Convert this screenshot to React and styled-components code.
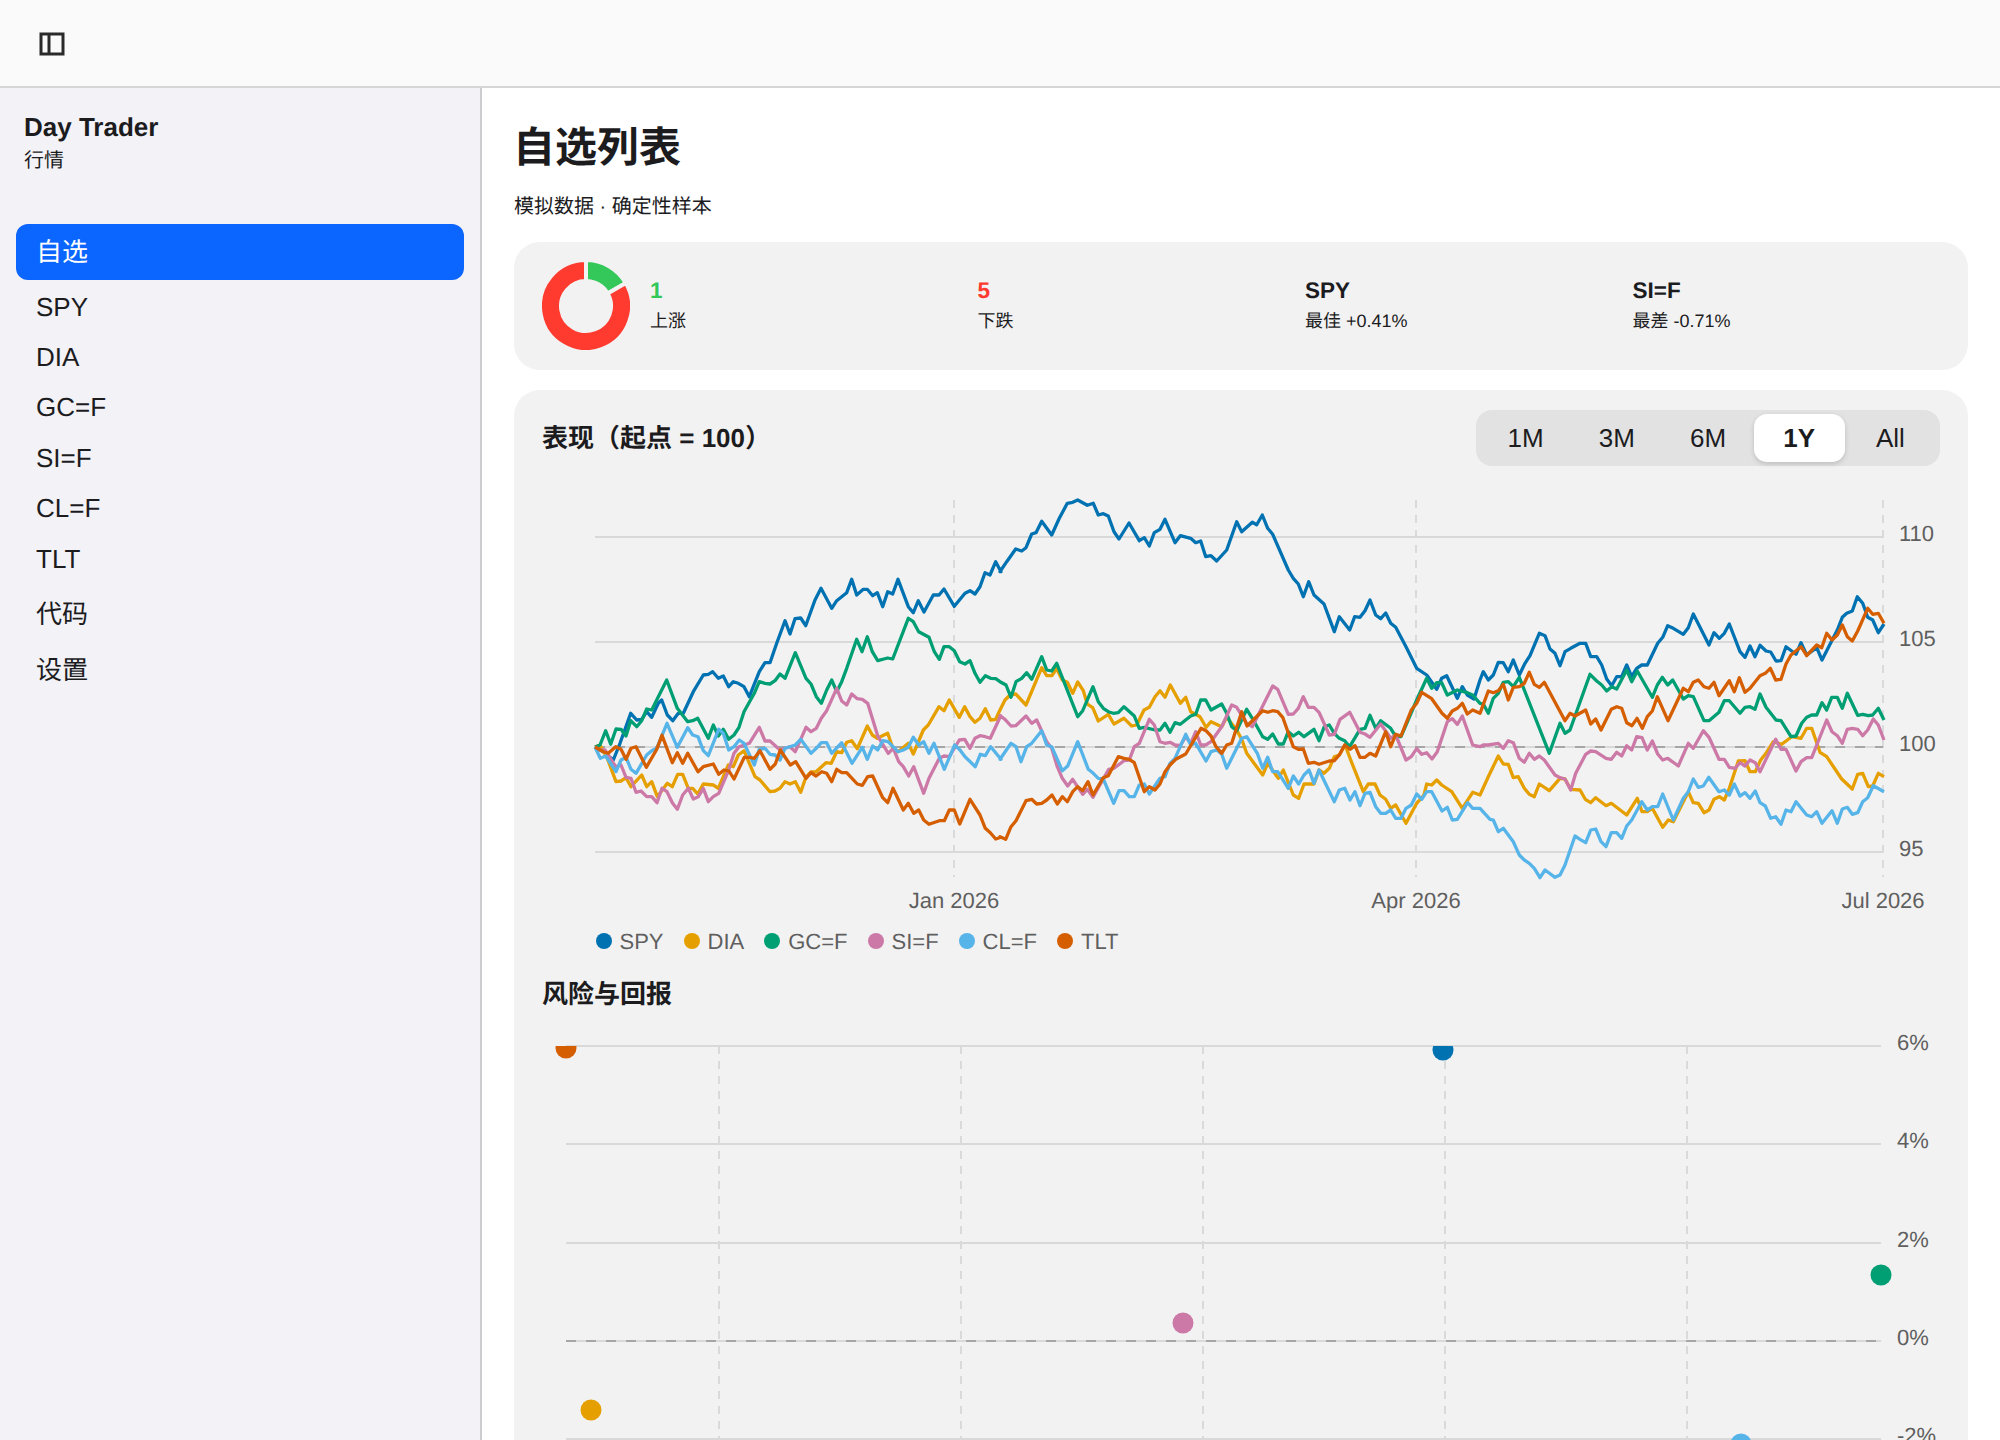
import React from 'react';
import styled, { createGlobalStyle } from 'styled-components';

const GlobalStyle = createGlobalStyle`
  html, body, #root {
    margin: 0;
    height: 100%;
  }
  body {
    font-family: "Liberation Sans", "Noto Sans CJK JP", sans-serif;
    text-rendering: geometricPrecision;
    color: #1c1c1e;
    background: #fff;
    overflow: hidden;
  }
`;

const Shell = styled.div`
  height: 100vh;
  display: flex;
  flex-direction: column;
`;

const TopBar = styled.header`
  flex: none;
  height: 86px;
  display: flex;
  align-items: center;
  padding-left: 39px;
  background: #fafafa;
  border-bottom: 2px solid #d6d6d6;
`;

const ToggleIcon = styled.svg`
  margin-top: 2px;
`;

const Body = styled.div`
  flex: 1;
  min-height: 0;
  display: flex;
`;

const Sidebar = styled.aside`
  flex: none;
  width: 480px;
  background: #f2f2f7;
  border-right: 2px solid #cdcdd0;
`;

const Brand = styled.div`
  padding: 24px 24px 0;
  margin-bottom: 49px;
`;

const BrandName = styled.div`
  font-size: 26px;
  line-height: 30px;
  font-weight: 700;
`;

const BrandSub = styled.div`
  font-size: 20px;
  line-height: 28px;
  margin-top: 5px;
`;

const Nav = styled.nav`
  display: flex;
  flex-direction: column;
  padding: 0 16px;
`;

const NavItem = styled.a`
  display: flex;
  align-items: center;
  height: ${props => (props.$tall ? '56px' : '50.4px')};
  padding: 0 20px;
  font-size: 26px;
  line-height: 30px;
  border-radius: 12px;
  color: ${props => (props.$active ? '#fff' : '#1c1c1e')};
  background: ${props => (props.$active ? '#0a66ff' : 'transparent')};
  margin-bottom: ${props => (props.$active ? '1.5px' : '0')};
  margin-top: ${props => (props.$gap ? '2.5px' : '0')};
`;

const Main = styled.main`
  flex: 1;
  min-width: 0;
  overflow: hidden;
  padding: 28.5px 32px 32px;
`;

const PageTitle = styled.h1`
  margin: 0 0 0 -1px;
  font-size: 42px;
  line-height: 61px;
  font-weight: 700;
`;

const PageSub = styled.p`
  margin: 15px 0 21.5px;
  font-size: 20px;
  line-height: 28px;
`;

const Card = styled.section`
  background: #f2f2f2;
  border-radius: 26px;
  padding: 20px 28px;
`;

const SummaryCard = styled(Card)`
  display: flex;
  align-items: center;
  gap: 20px;
  margin-bottom: 20px;
`;

const StatGrid = styled.div`
  flex: 1;
  display: grid;
  grid-template-columns: repeat(4, 1fr);
  gap: 20px;
`;

const Stat = styled.div`
  display: flex;
  flex-direction: column;
  gap: 3px;
  padding-bottom: 2px;
`;

const StatValue = styled.div`
  font-size: 22.5px;
  line-height: 28px;
  font-weight: 700;
  color: ${props => props.$color || '#1c1c1e'};
`;

const StatLabel = styled.div`
  font-size: 18px;
  line-height: 26px;
`;

const ChartHead = styled.div`
  display: flex;
  align-items: center;
  justify-content: space-between;
`;

const SectionTitle = styled.h2`
  margin: 0;
  font-size: 26px;
  line-height: 36px;
  font-weight: 700;
`;

const Segments = styled.div`
  display: flex;
  box-sizing: border-box;
  width: 464px;
  height: 56px;
  padding: 4px;
  background: #e2e2e2;
  border-radius: 16px;
`;

const Segment = styled.button`
  flex: 1;
  border: 0;
  padding: 0;
  font: inherit;
  font-size: 26px;
  font-weight: ${props => (props.$active ? 700 : 400)};
  color: #1c1c1e;
  border-radius: 13px;
  background: ${props => (props.$active ? '#fff' : 'transparent')};
  box-shadow: ${props => (props.$active ? '0 2px 5px rgba(0, 0, 0, 0.16)' : 'none')};
`;

const PlotSvg = styled.svg`
  display: block;
  width: 1398px;
  margin-top: ${props => props.$top}px;
`;

const Legend = styled.div`
  display: flex;
  align-items: center;
  gap: 20px;
  margin-top: 8.5px;
  padding-left: 53.5px;
`;

const LegendItem = styled.div`
  display: flex;
  align-items: center;
  gap: 8px;
  font-size: 22px;
  line-height: 25px;
  color: #5f5f5f;
`;

const LegendDot = styled.span`
  width: 16px;
  height: 16px;
  border-radius: 50%;
  background: ${props => props.$color};
`;

const RiskTitle = styled(SectionTitle)`
  margin-top: 22.5px;
`;

const GridLine = styled.line`
  stroke: ${props => (props.$vertical ? '#dadada' : '#d9d9d9')};
  stroke-width: 2;
  stroke-dasharray: ${props => (props.$vertical ? '8 7' : 'none')};
`;

const ZeroLine = styled.line`
  stroke: #a6a6a6;
  stroke-width: 2;
  stroke-dasharray: 10 10;
`;

const AxisText = styled.text`
  font-family: "Liberation Sans", sans-serif;
  font-size: 22px;
  fill: #5f5f5f;
`;

const SeriesLine = styled.polyline`
  fill: none;
  stroke: ${props => props.$color};
  stroke-width: 3.3;
  stroke-linejoin: round;
`;

const NAV = [
  { label: 'SPY' },
  { label: 'DIA' },
  { label: 'GC=F' },
  { label: 'SI=F' },
  { label: 'CL=F' },
  { label: 'TLT' },
  { label: '代码', tall: true, gap: true },
  { label: '设置', tall: true },
];
const RANGES = ['1M', '3M', '6M', '1Y', 'All'];

const STATS = [
  { value: '1', label: '上涨', color: '#34c759' },
  { value: '5', label: '下跌', color: '#ff3b30' },
  { value: 'SPY', label: '最佳 +0.41%' },
  { value: 'SI=F', label: '最差 -0.71%' },
];

// traced in three overlapping windows of the chart, 3 units per pixel
const WINDOWS = [520, 1000, 1480];

const SERIES = [
  {
    name: 'SPY',
    color: '#0072b2',
    traces: [
      '225,801 250,815 280,840 300,790 332,700 350,720 365,718 380,695 395,712 415,670 425,660 442,705 458,722 475,700 490,700 520,635 550,585 565,583 578,575 595,595 610,588 626,620 640,605 655,610 672,620 688,650 718,575 735,548 750,548 770,490 795,422 810,462 825,416 842,414 857,437 885,360 903,325 935,385 950,362 980,338 995,298 1010,345 1030,328 1042,328 1058,347 1072,338 1088,380 1103,335 1118,342 1134,298 1165,380 1180,398 1195,362 1212,396 1240,345 1257,345 1272,327 1303,379 1335,340 1350,332 1365,342 1380,320 1395,278 1410,285 1427,245 1443,275',
      '0,275 20,245 47,207 65,213 78,203 95,162 108,158 125,124 155,165 178,115 202,70 218,67 233,60 262,76 280,70 295,105 310,101 325,108 342,155 357,177 387,129 418,182 433,173 448,198 463,158 480,148 495,118 525,188 541,167 572,175 587,188 602,183 617,230 633,227 650,243 680,210 710,125 725,155 757,127 770,134 787,105 803,145 818,163 865,270 880,295 895,312 910,350 926,305 942,345 972,372 1003,455 1018,410 1049,450 1064,410 1080,412 1095,392 1110,360 1127,405 1142,416 1157,399 1172,430 1187,442 1218,500 1250,565 1280,585 1310,628 1325,595 1340,587 1372,655 1387,620 1402,645 1422,657',
      '0,600 10,575 25,600 40,585 55,547 70,548 85,575 100,540 118,585 135,550 150,527 178,460 195,467 210,507 225,520 240,557 255,515 272,505 300,490 317,490 332,530 350,530 365,555 380,597 395,617 410,590 425,590 440,555 455,590 470,565 485,555 502,555 533,490 548,472 563,437 580,445 610,463 625,443 640,402 687,495 702,458 718,475 733,460 748,432 780,515 795,532 810,498 825,530 840,496 858,513 872,516 888,543 903,542 918,500 948,523 963,488 980,525 1010,503 1026,540 1072,450 1087,412 1100,400 1117,393 1132,350 1148,370 1163,412 1178,420 1195,458 1212,432',
    ],
  },
  {
    name: 'DIA',
    color: '#e69f00',
    traces: [
      '225,801 240,795 260,830 288,905 303,903 318,893 333,920 365,885 380,920 395,905 412,950 442,910 457,920 473,883 488,883 505,925 518,925 533,942 550,912 580,915 595,925 625,855 640,860 655,825 672,812 705,890 720,900 750,935 765,933 780,925 795,905 810,912 826,905 842,937 857,893 872,876 888,875 918,848 934,850 950,815 965,818 980,787 995,782 1012,806 1042,738 1057,765 1072,775 1103,760 1118,803 1134,815 1165,790 1180,822 1210,750 1225,735 1257,680 1272,692 1288,660 1318,712 1334,680 1350,710 1365,727 1380,715 1396,686 1412,720 1427,718',
      '0,690 15,660 30,645 47,642 78,675 125,563 140,587 155,587 170,566 187,600 202,607 218,640 233,606 250,632 262,672 278,683 295,723 325,703 342,732 372,715 395,738 410,735 432,690 448,682 465,650 480,632 495,652 511,615 541,670 557,652 572,695 600,710 618,742 633,725 665,740 680,712 710,750 726,780 740,820 788,885 803,850 835,895 850,870 880,945 896,955 912,912 942,912 957,870 972,880 988,865 1003,830 1018,825 1035,795 1060,860 1090,935 1105,912 1125,912 1140,945 1157,958 1172,985 1187,975 1218,1030 1250,970 1272,945 1280,912 1295,915 1310,900 1325,915 1355,935 1387,985 1418,937',
      '0,945 25,890 55,828 70,852 85,853 100,893 115,890 133,925 148,943 163,950 178,912 208,932 240,895 255,897 272,928 300,930 316,958 332,968 347,953 378,977 394,970 440,1005 472,955 486,995 502,995 517,985 548,1042 565,1020 580,1025 625,935 640,968 655,970 672,998 687,990 702,958 718,950 733,960 748,925 775,843 795,842 810,875 826,875 842,840 858,820 880,785 905,793 935,770 963,775 980,745 995,745 1020,817 1040,830 1085,897 1117,927 1133,883 1148,880 1165,920 1178,918 1195,880 1212,890',
    ],
  },
  {
    name: 'GC=F',
    color: '#009e73',
    traces: [
      '225,801 240,795 257,752 272,793 288,747 303,748 318,768 332,722 350,740 365,722 380,687 395,690 440,600 472,685 503,725 518,722 533,715 565,775 580,735 595,768 610,748 626,778 642,765 657,742 672,695 703,640 718,605 735,610 750,612 765,602 780,582 795,595 826,518 858,595 873,612 889,650 904,670 920,630 935,600 950,635 965,605 980,565 1010,478 1026,515 1042,470 1057,515 1073,542 1103,534 1118,537 1165,415 1180,425 1196,455 1227,472 1243,515 1258,538 1272,500 1288,500 1303,512 1319,545 1335,552 1350,542 1365,580 1380,607 1396,587 1412,595 1427,596',
      '0,605 18,615 33,652 48,605 65,595 80,578 95,598 125,530 140,570 155,573 170,550 233,710 248,692 279,620 295,665 310,685 325,695 340,700 355,698 372,680 403,708 418,745 433,742 465,750 480,750 495,730 510,757 525,728 541,733 572,708 587,703 602,660 617,660 633,690 665,672 680,700 695,740 710,752 740,688 757,715 788,770 803,778 818,762 835,792 850,792 865,755 880,768 896,757 912,770 942,748 957,782 973,740 988,735 1003,760 1018,775 1034,782 1049,800 1080,748 1095,745 1110,706 1127,745 1142,722 1172,745 1187,770 1203,770 1250,660 1280,595 1295,625 1310,608 1325,608 1342,645 1372,630 1402,638 1418,645',
      '0,670 10,672 25,700 40,655 55,640 70,607 85,605 100,620 118,592 208,820 240,730 255,760 270,750 330,583 350,603 365,615 380,633 395,620 410,627 440,570 455,605 472,573 517,652 532,615 547,592 563,615 578,600 610,657 625,647 640,650 672,722 687,722 717,697 733,662 748,662 780,700 795,682 810,680 825,688 840,642 858,682 888,720 903,722 933,770 948,768 965,730 980,712 995,705 1010,705 1026,668 1040,690 1055,652 1072,652 1087,685 1102,640 1133,706 1148,703 1165,707 1178,705 1195,685 1212,720',
    ],
  },
  {
    name: 'SI=F',
    color: '#cc79a7',
    traces: [
      '225,801 240,810 255,810 287,860 303,855 318,892 333,895 348,937 363,933 380,950 395,950 411,968 426,925 441,935 457,968 472,988 488,945 505,925 520,957 535,950 550,925 565,965 580,950 596,940 626,870 642,820 657,800 688,790 718,742 735,783 750,783 780,810 795,805 810,800 826,815 858,742 873,755 889,745 904,715 920,692 950,625 965,663 980,675 995,642 1012,656 1027,658 1043,670 1074,770 1105,820 1120,805 1136,845 1150,860 1166,888 1181,860 1211,940 1227,895 1258,835 1272,828 1288,830 1318,780 1334,778 1350,805 1365,775 1380,767 1396,770 1411,775 1442,707',
      '0,707 15,718 33,738 47,737 78,708 95,730 110,720 140,785 155,805 172,860 187,895 203,918 218,898 248,943 262,928 279,952 326,868 342,865 372,842 388,840 403,800 418,790 448,718 463,735 480,785 495,790 510,787 525,795 541,797 557,770 572,790 587,755 602,795 617,795 633,785 665,740 695,675 710,682 740,730 757,740 818,618 833,628 865,703 880,702 895,685 910,650 925,682 942,682 957,697 988,765 1003,763 1020,718 1049,697 1080,757 1095,762 1110,772 1142,732 1172,775 1187,765 1218,840 1234,830 1250,806 1265,823 1280,818 1296,837 1312,815 1342,725 1357,716 1372,733 1387,708 1418,795',
      '0,800 10,795 25,795 55,790 70,805 85,782 100,788 118,835 133,847 148,820 163,838 178,828 193,840 225,885 240,893 255,897 272,930 287,880 317,823 332,813 347,815 378,835 394,838 410,817 425,828 440,797 455,810 470,770 486,773 502,810 517,783 533,822 548,840 563,835 595,858 625,790 640,805 670,752 687,772 717,838 733,838 748,862 765,865 780,848 795,858 810,840 826,848 840,875 887,778 903,808 918,808 948,873 963,845 980,833 995,833 1040,720 1056,755 1072,767 1087,790 1102,748 1117,745 1133,748 1148,767 1163,750 1180,717 1195,735 1212,780',
    ],
  },
  {
    name: 'CL=F',
    color: '#56b4e9',
    traces: [
      '225,801 241,835 257,828 288,875 303,840 318,832 333,868 348,880 380,825 395,812 410,805 441,730 472,802 503,743 518,765 534,770 550,812 565,827 596,748 610,760 626,810 642,800 658,780 672,790 703,855 718,808 735,805 750,823 765,825 780,840 795,805 826,795 842,778 873,820 889,805 904,788 920,788 935,820 965,788 996,850 1027,802 1042,838 1058,798 1073,810 1088,782 1104,785 1134,815 1150,810 1165,802 1180,772 1196,795 1211,785 1227,820 1242,790 1273,868 1304,795 1320,810 1335,830 1366,860 1381,823 1396,827 1412,800 1443,838',
      '0,838 33,790 48,800 63,845 80,800 95,790 125,752 140,795 155,800 187,872 203,858 233,785 265,868 280,880 295,895 310,897 341,970 357,932 372,932 388,950 403,950 418,915 433,912 448,942 480,895 495,890 510,850 525,835 557,763 572,795 587,790 618,843 633,815 650,810 665,822 680,865 710,805 725,775 740,770 772,820 788,865 803,832 818,875 833,875 865,925 880,888 896,912 912,885 927,870 942,910 957,870 1003,965 1018,930 1034,925 1050,960 1065,935 1080,977 1095,940 1110,937 1127,980 1142,1000 1157,1000 1172,990 1187,1015 1203,1015 1218,985 1234,975 1250,942 1265,958 1280,935 1295,935 1326,993 1342,982 1357,1020 1372,1018 1403,968 1418,985',
      '0,985 30,1018 40,1020 55,1055 70,1045 100,1085 118,1125 133,1140 148,1150 163,1165 180,1193 195,1170 225,1192 240,1185 255,1155 285,1068 300,1078 317,1088 332,1050 347,1047 363,1085 378,1100 394,1058 410,1058 425,1075 440,1038 455,1020 485,965 502,990 517,980 533,980 548,942 580,1020 610,955 625,935 640,897 655,922 670,918 686,892 717,935 733,930 748,945 763,912 780,948 795,938 810,955 826,933 840,968 856,978 872,1015 887,1010 903,1033 918,990 933,995 948,965 980,1005 995,1010 1010,995 1026,1030 1056,992 1072,1030 1087,987 1102,982 1117,1003 1133,998 1148,965 1163,953 1180,917 1212,935',
    ],
  },
  {
    name: 'TLT',
    color: '#d55e00',
    traces: [
      '225,801 250,815 265,820 287,800 303,808 318,838 333,805 348,800 379,862 410,808 426,766 457,848 472,818 488,850 503,820 534,875 550,860 580,852 596,883 612,870 627,873 642,897 673,832 690,832 703,835 720,812 750,868 766,852 781,810 811,855 827,845 858,895 873,878 888,888 905,875 920,880 935,905 950,868 965,878 980,878 996,895 1012,912 1027,916 1043,890 1058,888 1088,953 1103,968 1119,925 1150,990 1165,970 1181,1000 1196,990 1211,1020 1227,1033 1258,1022 1273,1022 1288,990 1303,990 1319,1032 1350,958 1380,1005 1396,1045 1411,1058 1427,1077 1443,1072',
      '0,1070 17,1078 33,1040 48,1022 78,962 95,958 110,972 125,970 140,960 156,945 172,972 187,950 202,965 218,935 233,920 248,932 264,905 279,945 310,893 325,887 355,830 372,835 388,838 403,848 433,935 448,920 465,930 480,912 495,875 510,855 527,838 557,822 603,745 618,752 633,768 648,800 665,820 680,795 695,790 725,695 741,738 788,692 803,697 818,692 833,695 848,712 880,800 895,808 910,807 925,850 942,847 957,853 988,843 1003,842 1018,825 1034,795 1050,808 1065,797 1080,832 1095,832 1110,820 1127,828 1157,755 1172,800 1187,763 1203,768 1234,690 1250,670 1265,637 1295,656 1326,700 1342,715 1357,693 1372,685 1387,670 1402,702 1418,690',
      '0,700 25,633 40,638 55,632 70,613 85,660 100,622 118,620 133,610 148,577 163,613 178,622 193,607 255,722 270,700 285,708 317,690 332,732 347,717 363,750 394,688 410,680 425,685 440,728 456,737 471,715 487,745 502,710 517,693 532,650 564,722 610,625 625,635 640,607 655,600 672,620 687,625 702,607 717,647 748,602 763,635 778,593 795,637 810,625 840,587 856,580 871,565 887,600 903,598 918,552 933,525 963,500 980,527 1010,495 1025,503 1040,460 1056,480 1072,465 1087,435 1102,470 1117,483 1133,453 1163,385 1178,403 1195,400 1212,430',
    ],
  },
];

const toPoints = traces =>
  traces
    .map((trace, i) =>
      trace
        .split(' ')
        .map(pair => {
          const [x, y] = pair.split(',').map(Number);
          return `${(WINDOWS[i] + x / 3).toFixed(1)},${(480 + y / 3).toFixed(1)}`;
        })
        .join(' ')
    )
    .join(' ');

const PERF_TICKS = [
  { label: '110', y: 537 },
  { label: '105', y: 642 },
  { label: '100', y: 747 },
  { label: '95', y: 852 },
];

const PERF_DATES = [
  { label: 'Jan 2026', x: 954 },
  { label: 'Apr 2026', x: 1416 },
  { label: 'Jul 2026', x: 1883 },
];

const RISK_TICKS = [
  { label: '6%', y: 1046 },
  { label: '4%', y: 1144 },
  { label: '2%', y: 1243 },
  { label: '0%', y: 1341 },
  { label: '-2%', y: 1439 },
];

const RISK_COLS = [719, 961, 1203, 1445, 1687];

const RISK_DOTS = [
  { name: 'SPY', color: '#0072b2', cx: 1443, cy: 1050 },
  { name: 'DIA', color: '#e69f00', cx: 591, cy: 1410 },
  { name: 'GC=F', color: '#009e73', cx: 1881, cy: 1275 },
  { name: 'SI=F', color: '#cc79a7', cx: 1183, cy: 1323 },
  { name: 'CL=F', color: '#56b4e9', cx: 1741, cy: 1444 },
  { name: 'TLT', color: '#d55e00', cx: 566, cy: 1048 },
];

const PanelIcon = () => (
  <ToggleIcon width="26" height="24" viewBox="0 0 26 24" fill="none" stroke="#2a2a2a" strokeWidth="3">
    <rect x="2" y="2" width="22" height="20" />
    <line x1="10" y1="1" x2="10" y2="23" />
  </ToggleIcon>
);

const sectorPath = (from, to, outer, inner) => {
  const at = (deg, r) => {
    const a = (deg * Math.PI) / 180;
    return `${(r * Math.sin(a)).toFixed(2)} ${(-r * Math.cos(a)).toFixed(2)}`;
  };
  const large = to - from > 180 ? 1 : 0;
  return `M${at(from, outer)} A${outer} ${outer} 0 ${large} 1 ${at(to, outer)} L${at(to, inner)} A${inner} ${inner} 0 ${large} 0 ${at(from, inner)} Z`;
};

const Donut = () => (
  <svg width="88" height="88" viewBox="-44 -44 88 88">
    <path d={sectorPath(0, 60, 46, 25)} fill="#34c759" stroke="#f2f2f2" strokeWidth="4" />
    <path d={sectorPath(60, 360, 46, 25)} fill="#ff3b30" stroke="#f2f2f2" strokeWidth="4" />
  </svg>
);

const PerformanceChart = () => (
  <PlotSvg $top={24} height="430" viewBox="542 490 1398 430">
    {PERF_DATES.map(d => (
      <GridLine key={d.label} $vertical x1={d.x} x2={d.x} y1="500" y2="877" />
    ))}
    {PERF_TICKS.map(t => (
      <GridLine key={t.label} x1="595" x2="1883" y1={t.y} y2={t.y} />
    ))}
    <ZeroLine x1="595" x2="1883" y1="747" y2="747" />
    {SERIES.map(s => (
      <SeriesLine key={s.name} $color={s.color} points={toPoints(s.traces)} />
    ))}
    {PERF_TICKS.map(t => (
      <AxisText key={t.label} x="1899" y={t.y + 4}>
        {t.label}
      </AxisText>
    ))}
    {PERF_DATES.map(d => (
      <AxisText key={d.label} x={d.x} y="908" textAnchor="middle">
        {d.label}
      </AxisText>
    ))}
  </PlotSvg>
);

const RiskChart = () => (
  <PlotSvg $top={18} height="430" viewBox="542 1030 1398 430">
    <defs>
      <clipPath id="risk-plot">
        <rect x="542" y="1046" width="1398" height="420" />
      </clipPath>
    </defs>
    {RISK_COLS.map(x => (
      <GridLine key={x} $vertical x1={x} x2={x} y1="1046" y2="1460" />
    ))}
    {RISK_TICKS.map(t => (
      <GridLine key={t.label} x1="566" x2="1881" y1={t.y} y2={t.y} />
    ))}
    <ZeroLine x1="566" x2="1881" y1="1341" y2="1341" />
    <g clipPath="url(#risk-plot)">
      {RISK_DOTS.map(d => (
        <circle key={d.name} cx={d.cx} cy={d.cy} r="10.5" fill={d.color} />
      ))}
    </g>
    {RISK_TICKS.map(t => (
      <AxisText key={t.label} x="1897" y={t.y + 4}>
        {t.label}
      </AxisText>
    ))}
  </PlotSvg>
);

const App = () => (
  <Shell>
    <GlobalStyle />
    <TopBar>
      <PanelIcon />
    </TopBar>
    <Body>
      <Sidebar>
        <Brand>
          <BrandName>Day Trader</BrandName>
          <BrandSub>行情</BrandSub>
        </Brand>
        <Nav>
          <NavItem $active $tall>
            自选
          </NavItem>
          {NAV.map(item => (
            <NavItem key={item.label} $tall={item.tall} $gap={item.gap}>
              {item.label}
            </NavItem>
          ))}
        </Nav>
      </Sidebar>
      <Main>
        <PageTitle>自选列表</PageTitle>
        <PageSub>模拟数据 · 确定性样本</PageSub>
        <SummaryCard>
          <Donut />
          <StatGrid>
            {STATS.map(s => (
              <Stat key={s.label}>
                <StatValue $color={s.color}>{s.value}</StatValue>
                <StatLabel>{s.label}</StatLabel>
              </Stat>
            ))}
          </StatGrid>
        </SummaryCard>
        <Card>
          <ChartHead>
            <SectionTitle>表现（起点 = 100）</SectionTitle>
            <Segments>
              {RANGES.map(r => (
                <Segment key={r} $active={r === '1Y'}>
                  {r}
                </Segment>
              ))}
            </Segments>
          </ChartHead>
          <PerformanceChart />
          <Legend>
            {SERIES.map(s => (
              <LegendItem key={s.name}>
                <LegendDot $color={s.color} />
                {s.name}
              </LegendItem>
            ))}
          </Legend>
          <RiskTitle>风险与回报</RiskTitle>
          <RiskChart />
        </Card>
      </Main>
    </Body>
  </Shell>
);

export default App;
